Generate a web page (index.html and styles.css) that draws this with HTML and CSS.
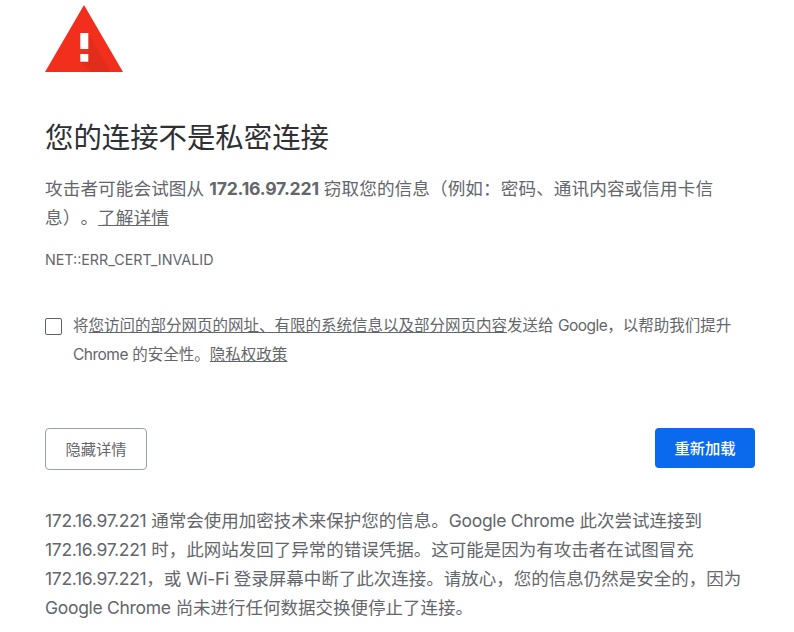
FILE: index.html
```html
<!DOCTYPE html>
<html lang="zh">
<head>
    <title>隐私设置错误</title>
    <link rel="stylesheet" href="styles.css">
</head>
<body>
    <div class="interstitial">
        <!-- Warning icon -->
        <svg class="warning-icon" width="78" height="68" viewBox="0 0 78 68">
            <path d="M39 0 L78 67 L0 67 Z" fill="#f12f1c"/>
            <path d="M43 28 L43 56.700 L35.300 56.700 L46 67 L66 67 L50 40 Z" fill="#b8261a" opacity="0.25"/>
            <rect x="35.300" y="28" width="8" height="16" fill="#fff"/>
            <rect x="35.300" y="49" width="8" height="7.700" fill="#fff"/>
        </svg>

        <h1 class="title">您的连接不是私密连接</h1>
        <p class="message">攻击者可能会试图从 <strong>172.16.97.221</strong> 窃取您的信息（例如：密码、通讯内容或信用卡信<br>息）。<a href="#">了解详情</a></p>
        <p class="error-code">NET::ERR_CERT_INVALID</p>

        <div class="opt-in">
            <span class="checkbox"></span>
            <p>将<a href="#">您访问的部分网页的网址、有限的系统信息以及部分网页内容</a>发送给 <span class="latin">Google</span>，以帮助我们提升<br><span class="latin">Chrome</span> 的安全性。<a href="#">隐私权政策</a></p>
        </div>

        <div class="actions">
            <button class="btn btn-details" type="button">隐藏详情</button>
            <button class="btn btn-reload" type="button">重新加载</button>
        </div>

        <p class="details"><span class="latin">172.16.97.221</span> 通常会使用加密技术来保护您的信息。<span class="latin">Google Chrome</span> 此次尝试连接到<br><span class="latin">172.16.97.221</span> 时，此网站发回了异常的错误凭据。这可能是因为有攻击者在试图冒充<br><span class="latin">172.16.97.221</span>，或 <span class="latin">Wi-Fi</span> 登录屏幕中断了此次连接。请放心，您的信息仍然是安全的，因为<br><span class="latin">Google Chrome</span> 尚未进行任何数据交换便停止了连接。</p>
    </div>
</body>
</html>
```

FILE: styles.css
```css
body {
    margin: 0;
    background-color: #fff;
    font-family: "Inter", "Liberation Sans", "Noto Sans CJK SC", sans-serif;
    color: #63666b;
    text-spacing-trim: space-all;
}

.interstitial {
    width: 710px;
    padding: 5px 39px 0 45px;
}

.warning-icon {
    display: block;
}

.title {
    margin: 46px 0 0;
    font-size: 28.4px;
    line-height: 38px;
    font-weight: 400;
    color: #2f3033;
}

.message {
    margin: 17px 0 0;
    font-size: 17.600px;
    line-height: 29px;
    letter-spacing: 0.1px;
}

.message strong {
    font-weight: 700;
    letter-spacing: -0.2px;
}

a {
    color: #63666b;
    text-decoration: underline;
}

.error-code {
    margin: 19px 0 0;
    font-size: 14.300px;
    line-height: 18px;
}

.opt-in {
    display: flex;
    gap: 11px;
    margin-top: 42px;
}

.opt-in p {
    margin: 0;
    font-size: 15.500px;
    line-height: 29px;
}

.opt-in .latin {
    letter-spacing: -0.5px;
}

.checkbox {
    flex: none;
    width: 15px;
    height: 15px;
    margin-top: 7px;
    border: 1px solid #5f6368;
    border-radius: 2px;
}

.actions {
    display: flex;
    justify-content: space-between;
    margin-top: 59px;
}

.btn {
    height: 42px;
    padding-bottom: 3px;
    border-radius: 4px;
    font-family: inherit;
    font-size: 15.300px;
}

.btn-details {
    width: 102px;
    border: 1px solid #9aa0a6;
    background-color: #fff;
    color: #63666b;
}

.btn-reload {
    width: 100px;
    height: 40px;
    border: none;
    background-color: #0b69ee;
    color: #fff;
    font-weight: 500;
}

.details {
    margin: 36px 0 0;
    font-size: 17.500px;
    line-height: 29px;
    white-space: nowrap;
}

.details .latin {
    letter-spacing: -0.3px;
}
```
